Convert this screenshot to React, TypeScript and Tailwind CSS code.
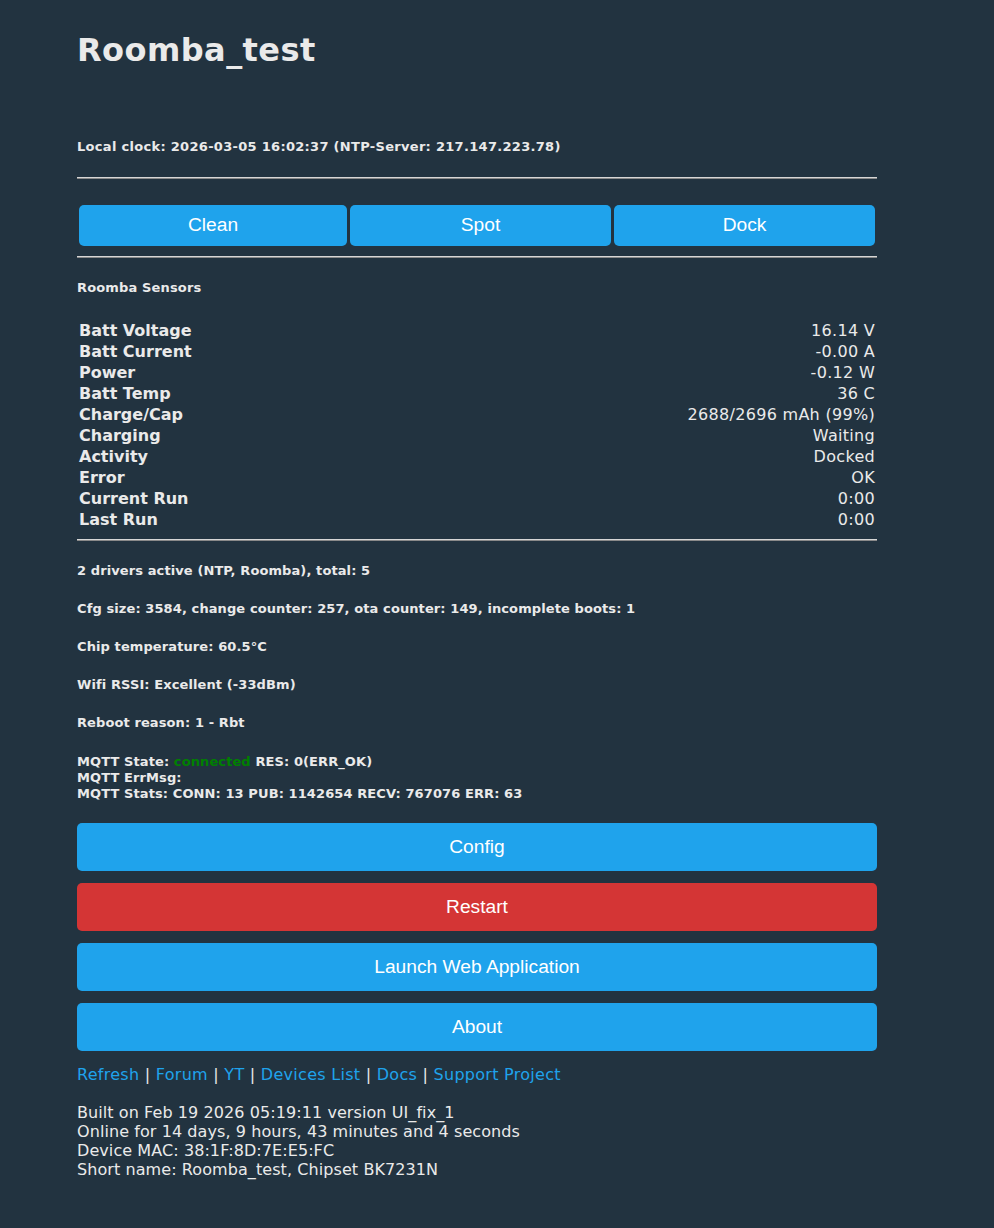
const sensors: [string, string][] = [
  ['Batt Voltage', '16.14 V'],
  ['Batt Current', '-0.00 A'],
  ['Power', '-0.12 W'],
  ['Batt Temp', '36 C'],
  ['Charge/Cap', '2688/2696 mAh (99%)'],
  ['Charging', 'Waiting'],
  ['Activity', 'Docked'],
  ['Error', 'OK'],
  ['Current Run', '0:00'],
  ['Last Run', '0:00'],
]

const links = ['Refresh', 'Forum', 'YT', 'Devices List', 'Docs', 'Support Project']

function Rule() {
  return <div className="h-[2px] w-full bg-[#d6d6d6] border-b border-[#8a8a8a]" />
}

function BigButton({ label, red }: { label: string; red?: boolean }) {
  return (
    <button
      className={`w-full h-[48px] rounded-[5px] text-[19.2px] text-white font-['Liberation_Sans',Arial,sans-serif] ${
        red ? 'bg-[#d43535]' : 'bg-[#1fa3ec]'
      }`}
    >
      {label}
    </button>
  )
}

export default function App() {
  return (
    <div className="min-h-[1228px] bg-[#223340] text-[#eaeaea] font-['DejaVu_Sans',Verdana,sans-serif]">
      <div className="w-[800px] ml-[77px] pt-[31px]">
        <h1 className="text-[32px] leading-[38px] font-bold tracking-[0.45px]">Roomba_test</h1>

        <h5 className="mt-[70px] text-[13px] leading-[16px] font-bold tracking-[0.3px]">
          Local clock: 2026-03-05 16:02:37 (NTP-Server: 217.147.223.78)
        </h5>

        <div className="mt-[22px]">
          <Rule />
        </div>

        {/* robot controls */}
        <div className="mt-[26px] flex gap-[3px] px-[2px]">
          {['Clean', 'Spot', 'Dock'].map((b, i) => (
            <button
              key={b}
              className={`${i === 0 ? 'flex-[268]' : 'flex-[261]'} h-[41px] rounded-[5px] bg-[#1fa3ec] text-white text-[19.2px] font-['Liberation_Sans',Arial,sans-serif]`}
            >
              {b}
            </button>
          ))}
        </div>

        <div className="mt-[10px]">
          <Rule />
        </div>

        <h5 className="mt-[22px] text-[13px] leading-[16px] font-bold tracking-[0.15px]">Roomba Sensors</h5>

        <div className="mt-[24px] px-[2px] flex flex-col">
          {sensors.map(([k, v]) => (
            <div key={k} className="h-[21px] flex items-center justify-between text-[16px]">
              <span className="font-bold">{k}</span>
              <span className="tracking-[0.3px]">{v}</span>
            </div>
          ))}
        </div>

        <div className="mt-[9px]">
          <Rule />
        </div>

        <div className="mt-[22px] flex flex-col gap-[22px] text-[13px] leading-[16px] font-bold tracking-[0.1px]">
          <h5>2 drivers active (NTP, Roomba), total: 5</h5>
          <h5>Cfg size: 3584, change counter: 257, ota counter: 149, incomplete boots: 1</h5>
          <h5>Chip temperature: 60.5°C</h5>
          <h5>Wifi RSSI: Excellent (-33dBm)</h5>
          <h5>Reboot reason: 1 - Rbt</h5>
          <h5 className="mt-[1px]">
            MQTT State: <span className="text-[#008000]">connected</span> RES: 0(ERR_OK)
            <br />
            MQTT ErrMsg:
            <br />
            MQTT Stats: CONN: 13 PUB: 1142654 RECV: 767076 ERR: 63
          </h5>
        </div>

        <div className="mt-[21px] flex flex-col gap-[12px]">
          <BigButton label="Config" />
          <BigButton label="Restart" red />
          <BigButton label="Launch Web Application" />
          <BigButton label="About" />
        </div>

        <div className="mt-[14px] text-[16px] leading-[19px] tracking-[0.28px]">
          {links.map((l, i) => (
            <span key={l}>
              {i > 0 && ' | '}
              <a className="text-[#1fa3ec]">{l}</a>
            </span>
          ))}
        </div>

        <div className="mt-[19px] text-[16px] leading-[19px] tracking-[0.08px]">
          Built on Feb 19 2026 05:19:11 version UI_fix_1
          <br />
          Online for 14 days, 9 hours, 43 minutes and 4 seconds
          <br />
          Device MAC: 38:1F:8D:7E:E5:FC
          <br />
          Short name: Roomba_test, Chipset BK7231N
        </div>
      </div>
    </div>
  )
}
